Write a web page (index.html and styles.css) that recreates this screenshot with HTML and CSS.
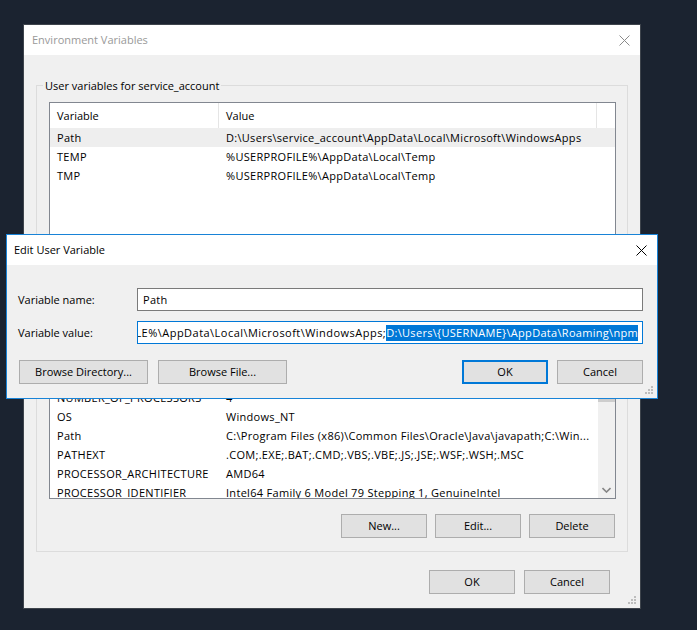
FILE: index.html
```html
<!DOCTYPE html>
<html lang="en">
<head>
<meta charset="utf-8">
<title>Environment Variables</title>
<link rel="stylesheet" href="styles.css">
</head>
<body>
<div class="desktop">
  <div class="window env">
    <div class="titlebar">
      <span class="title inactive">Environment Variables</span>
      <svg class="close close-inactive" width="11" height="11" viewBox="0 0 11 11"><path d="M0.5 0.5 L10.5 10.5 M10.5 0.5 L0.5 10.5" /></svg>
    </div>
    <div class="env-body">
      <section class="group user-group">
        <div class="group-title">User variables for service_account</div>
        <div class="listview user-list">
          <div class="lv-table">
            <div class="lv-head"><div class="lv-hcell">Variable</div><div class="lv-hcell">Value</div></div>
            <div class="lv-row selected"><div class="lv-cell">Path</div><div class="lv-cell">D:\Users\service_account\AppData\Local\Microsoft\WindowsApps</div></div>
            <div class="lv-row"><div class="lv-cell">TEMP</div><div class="lv-cell">%USERPROFILE%\AppData\Local\Temp</div></div>
            <div class="lv-row"><div class="lv-cell">TMP</div><div class="lv-cell">%USERPROFILE%\AppData\Local\Temp</div></div>
          </div>
        </div>
        <div class="btn-row">
          <button class="btn">New...</button>
          <button class="btn">Edit...</button>
          <button class="btn">Delete</button>
        </div>
      </section>
      <section class="group system-group">
        <div class="group-title">System variables</div>
        <div class="listview system-list">
          <div class="lv-table">
            <div class="lv-head"><div class="lv-hcell">Variable</div><div class="lv-hcell">Value</div></div>
            <div class="lv-row"><div class="lv-cell">ComSpec</div><div class="lv-cell">C:\Windows\system32\cmd.exe</div></div>
            <div class="lv-row"><div class="lv-cell">DriverData</div><div class="lv-cell">C:\Windows\System32\Drivers\DriverData</div></div>
            <div class="lv-row"><div class="lv-cell">NUMBER_OF_PROCESSORS</div><div class="lv-cell">4</div></div>
            <div class="lv-row"><div class="lv-cell">OS</div><div class="lv-cell">Windows_NT</div></div>
            <div class="lv-row"><div class="lv-cell">Path</div><div class="lv-cell">C:\Program Files (x86)\Common Files\Oracle\Java\javapath;C:\Win...</div></div>
            <div class="lv-row"><div class="lv-cell">PATHEXT</div><div class="lv-cell">.COM;.EXE;.BAT;.CMD;.VBS;.VBE;.JS;.JSE;.WSF;.WSH;.MSC</div></div>
            <div class="lv-row"><div class="lv-cell">PROCESSOR_ARCHITECTURE</div><div class="lv-cell">AMD64</div></div>
            <div class="lv-row"><div class="lv-cell">PROCESSOR_IDENTIFIER</div><div class="lv-cell">Intel64 Family 6 Model 79 Stepping 1, GenuineIntel</div></div>
          </div>
          <div class="scrollbar">
            <div class="sb-btn"><svg width="9" height="6" viewBox="0 0 9 6"><path d="M0.5 5 L4.5 1 L8.5 5" /></svg></div>
            <div class="sb-thumb"></div>
            <div class="sb-track"></div>
            <div class="sb-btn"><svg width="9" height="6" viewBox="0 0 9 6"><path d="M0.5 1 L4.5 5 L8.5 1" /></svg></div>
          </div>
        </div>
        <div class="btn-row">
          <button class="btn">New...</button>
          <button class="btn">Edit...</button>
          <button class="btn">Delete</button>
        </div>
      </section>
      <div class="dialog-buttons">
        <button class="btn">OK</button>
        <button class="btn">Cancel</button>
      </div>
    </div>
    <svg class="grip" width="9" height="9" viewBox="0 0 9 9"><rect x="6" y="0" width="2" height="2"/><rect x="3" y="3" width="2" height="2"/><rect x="6" y="3" width="2" height="2"/><rect x="0" y="6" width="2" height="2"/><rect x="3" y="6" width="2" height="2"/><rect x="6" y="6" width="2" height="2"/></svg>
  </div>

  <div class="window edit">
    <div class="titlebar">
      <span class="title">Edit User Variable</span>
      <svg class="close" width="11" height="11" viewBox="0 0 11 11"><path d="M0.5 0.5 L10.5 10.5 M10.5 0.5 L0.5 10.5" /></svg>
    </div>
    <div class="edit-body">
      <div class="field-row">
        <span class="field-label">Variable name:</span>
        <div class="textbox">Path</div>
      </div>
      <div class="field-row">
        <span class="field-label">Variable value:</span>
        <div class="textbox focused"><span class="tb-text">LE%\AppData\Local\Microsoft\WindowsApps;</span><span class="tb-sel">D:\Users\{USERNAME}\AppData\Roaming\npm</span></div>
      </div>
      <div class="edit-buttons">
        <button class="btn wide">Browse Directory...</button>
        <button class="btn wide">Browse File...</button>
        <span class="spacer"></span>
        <button class="btn default">OK</button>
        <button class="btn">Cancel</button>
      </div>
    </div>
    <svg class="grip" width="9" height="9" viewBox="0 0 9 9"><rect x="6" y="0" width="2" height="2"/><rect x="3" y="3" width="2" height="2"/><rect x="6" y="3" width="2" height="2"/><rect x="0" y="6" width="2" height="2"/><rect x="3" y="6" width="2" height="2"/><rect x="6" y="6" width="2" height="2"/></svg>
  </div>
</div>
</body>
</html>
```

FILE: styles.css
```css
html, body {
  margin: 0;
  padding: 0;
}

body {
  background: #1b2330;
  font-family: "Open Sans", "Noto Sans", sans-serif;
  font-size: 11px;
  color: #000;
}

.desktop {
  position: relative;
  width: 697px;
  height: 630px;
  padding: 24px 0 0 23px;
  box-sizing: border-box;
  overflow: hidden;
}

.window {
  position: relative;
  box-sizing: border-box;
  background: #f0f0f0;
  display: flex;
  flex-direction: column;
}

.env {
  width: 618px;
  height: 585px;
  border: 1px solid #3e444c;
}

.titlebar {
  height: 30px;
  flex: none;
  background: #fff;
  display: flex;
  align-items: center;
  justify-content: space-between;
}

.env .titlebar {
  padding-left: 8px;
}

.title {
  line-height: 16px;
}

.title.inactive {
  color: #999;
}

.close {
  margin-right: 10px;
  fill: none;
  stroke: #000;
  stroke-width: 1;
}

.close.close-inactive {
  stroke: #8a8a8a;
}

.env-body {
  padding: 30px 12px 0 12px;
  display: flex;
  flex-direction: column;
}

.group {
  border: 1px solid #dcdcdc;
  padding: 0 11px 13px 12px;
}

.system-group {
  margin-top: 14px;
}

.group-title {
  width: fit-content;
  height: 16px;
  line-height: 16px;
  margin: -8px 0 0 -6px;
  padding: 0 2px;
  background: #f0f0f0;
  white-space: nowrap;
}

.listview {
  box-sizing: border-box;
  margin-top: 8px;
  border: 1px solid #828790;
  background: #fff;
  display: flex;
  overflow: hidden;
}

.user-list {
  height: 138px;
}

.system-list {
  height: 175px;
}

.lv-table {
  flex: 1;
  min-width: 0;
  overflow: hidden;
}

.lv-head,
.lv-row {
  display: grid;
  grid-template-columns: 169px 378px;
}

.lv-hcell {
  height: 25px;
  line-height: 25px;
  padding-left: 7px;
  border-right: 1px solid #e5e5e5;
  box-sizing: border-box;
  white-space: nowrap;
}

.lv-cell {
  height: 19px;
  line-height: 19px;
  padding-left: 7px;
  letter-spacing: 0.3px;
  white-space: nowrap;
  overflow: hidden;
}

.lv-row.selected {
  background: #eeeeee;
}

.scrollbar {
  width: 17px;
  flex: none;
  background: #f0f0f0;
  display: flex;
  flex-direction: column;
}

.sb-btn {
  height: 17px;
  display: flex;
  align-items: center;
  justify-content: center;
}

.sb-btn svg {
  fill: none;
  stroke: #858585;
  stroke-width: 1.6;
}

.sb-thumb {
  height: 60px;
  background: #cdcdcd;
}

.sb-track {
  flex: 1;
}

.btn-row {
  margin-top: 15px;
  padding-right: 1px;
  display: flex;
  justify-content: flex-end;
  gap: 8px;
}

.btn {
  box-sizing: border-box;
  width: 86px;
  height: 24px;
  margin: 0;
  padding: 0;
  background: #e1e1e1;
  border: 1px solid #adadad;
  border-radius: 0;
  font-family: inherit;
  font-size: 11px;
  color: #000;
  line-height: 20px;
  text-align: center;
}

.btn.wide {
  width: 129px;
}

.btn.default {
  border: 2px solid #0078d7;
}

.dialog-buttons {
  margin-top: 18px;
  padding-right: 18px;
  display: flex;
  justify-content: flex-end;
  gap: 9px;
}

.grip {
  position: absolute;
  right: 3px;
  bottom: 3px;
  fill: #bdbdbd;
}

/* Edit User Variable dialog, floating over the main window */
.edit {
  position: absolute;
  left: 6px;
  top: 234px;
  width: 652px;
  height: 165px;
  border: 1px solid #1883d7;
}

.edit .titlebar {
  padding-left: 7px;
}

.edit-body {
  padding: 23px 14px 0 12px;
  display: flex;
  flex-direction: column;
}

.field-row {
  display: grid;
  grid-template-columns: 118px 1fr;
  align-items: center;
}

.field-row + .field-row {
  margin-top: 10px;
}

.field-label {
  margin-left: -1px;
  white-space: nowrap;
}

.textbox {
  box-sizing: border-box;
  height: 23px;
  border: 1px solid #7a7a7a;
  background: #fff;
  padding: 0 5px;
  line-height: 21px;
  letter-spacing: 0.3px;
  white-space: nowrap;
  overflow: hidden;
}

.textbox.focused {
  border-color: #0078d7;
  display: flex;
  justify-content: flex-end;
  align-items: center;
  padding: 0 4px 0 0;
}

.tb-text,
.tb-sel {
  flex: none;
  line-height: 16px;
}

.tb-text {
  letter-spacing: 0.47px;
}

.tb-sel {
  background: #0078d7;
  color: #fff;
}

.edit-buttons {
  margin-top: 16px;
  display: flex;
  gap: 10px;
}

.edit-buttons .spacer {
  flex: 1;
}

.edit-buttons .btn.default {
  margin-right: -1px;
}
```
